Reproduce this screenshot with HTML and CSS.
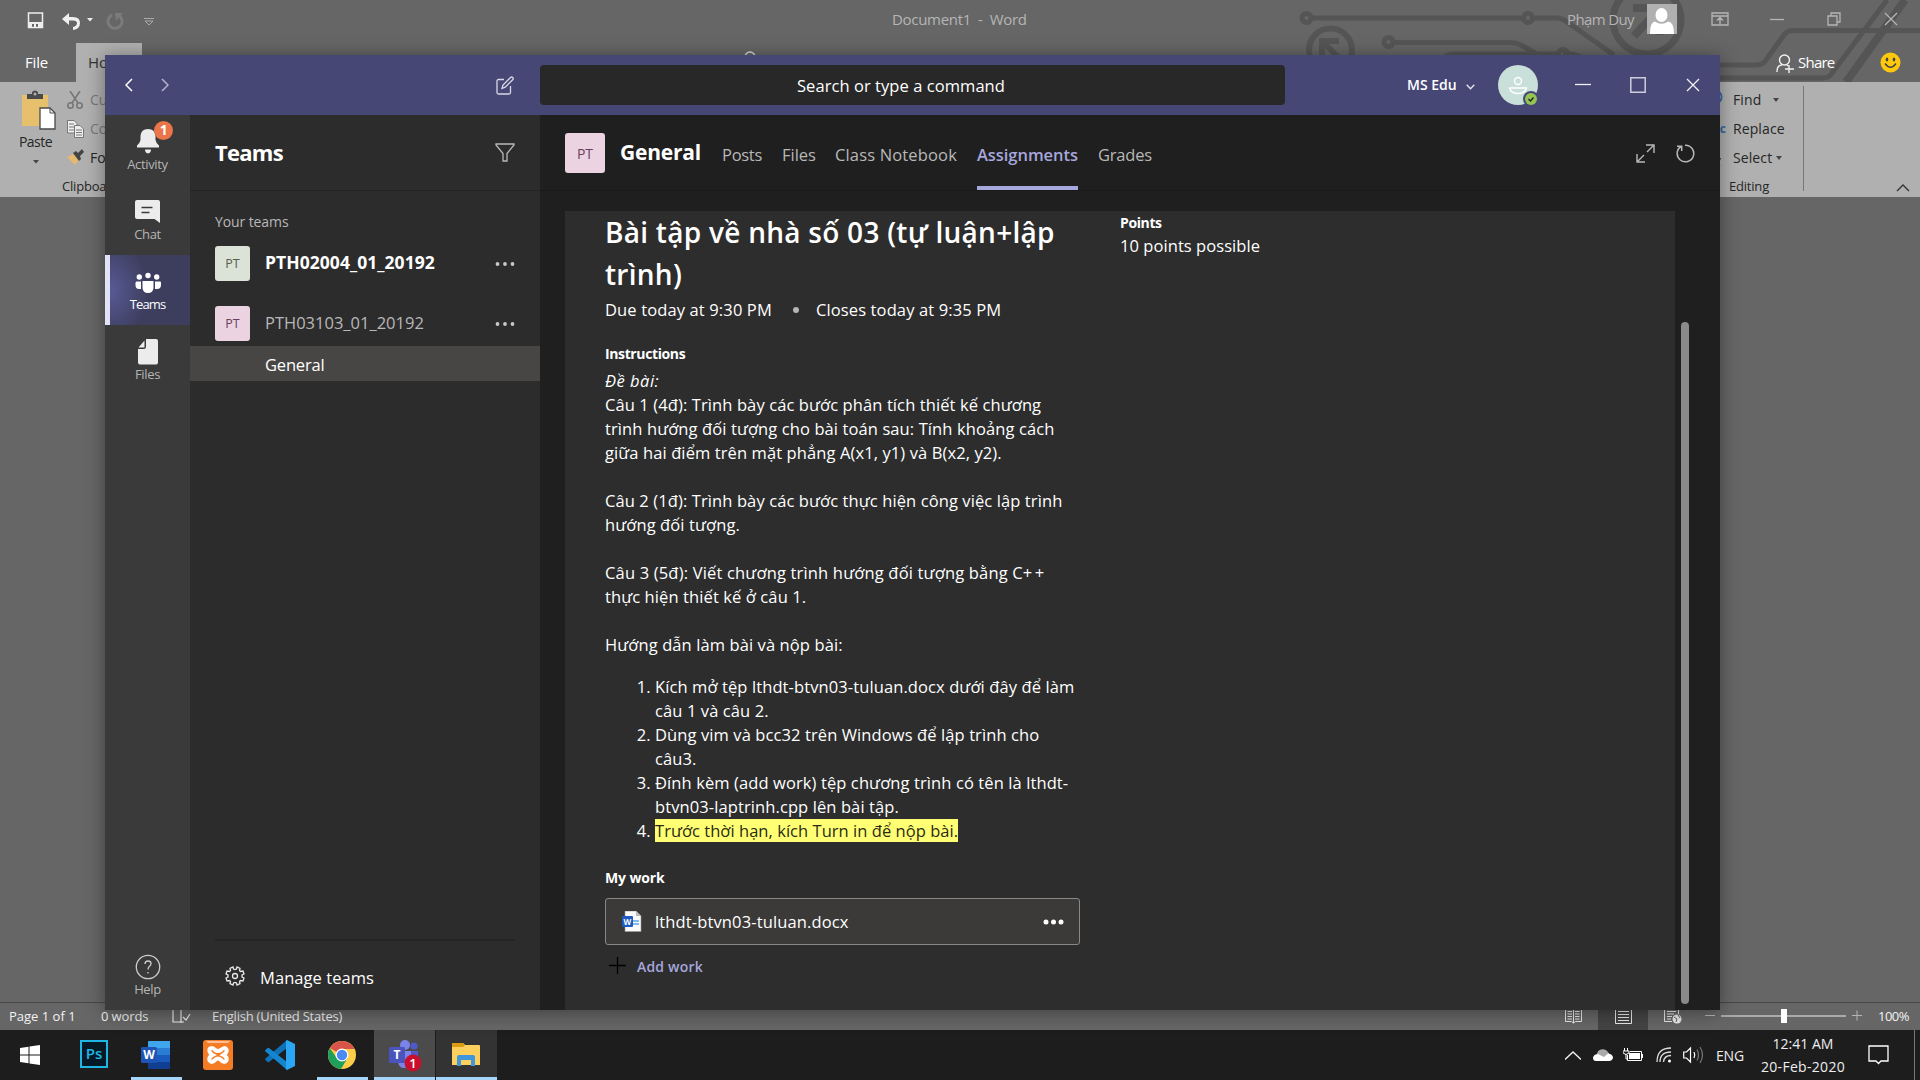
FILE: index.html
```html
<!DOCTYPE html>
<html lang="vi">
<head>
<meta charset="utf-8">
<title>Teams</title>
<link rel="stylesheet" href="styles.css">
</head>
<body>
<div class="desktop">

  <div class="word">
    <svg class="circuit" width="640" height="82" viewBox="1280 0 640 82" fill="none" stroke="#555" stroke-width="5">
      <circle cx="1306.500" cy="18" r="4.500"/><path d="M1311 18H1523"/><circle cx="1528" cy="18" r="4.500"/><path d="M1533 18H1556Q1562 18 1567 22L1614 55"/>
      <circle cx="1388.500" cy="42" r="4.500"/><path d="M1393 42.500H1510Q1516 42.500 1521 45L1540 56"/>
      <path d="M1445 56Q1450 54 1456 54H1558M1563 54Q1575 53 1582 58"/><circle cx="1563" cy="54" r="4.500"/>
      <circle cx="1330.500" cy="50" r="21.500" stroke-width="6"/><path d="M1322 58V41H1339M1322 41L1342 61" stroke-width="6"/>
      <circle cx="1647" cy="20" r="34" stroke-width="7"/><path d="M1633 8H1660V35M1659 9L1634 36" stroke-width="8"/>
      <path d="M1720 65H1756Q1763 65 1766 60L1784 35Q1787 30.500 1793 30.500H1920"/>
      <path d="M1720 78H1823Q1829 78 1832 73L1887 0"/><path d="M1846 82L1905 0" stroke-width="8"/>
    </svg>

    <header class="word-title">
      <div class="quick">
        <svg class="q-save" width="17" height="17" viewBox="0 0 17 17"><path d="M1.500 1H15.500V15.500H1.500Z" fill="none" stroke="#eee" stroke-width="1.500"/><path d="M1 10H16V16H11V12H9V16H7V12H5V16H1Z" fill="#eee"/></svg>
        <svg class="q-undo" width="19" height="17" viewBox="0 0 19 17"><path d="M0 6L7 0V4H11Q18 4 18 10Q18 16 11 17L11 14Q15 13 15 10Q15 7.500 11 7.500H7V12Z" fill="#f0f0f0"/></svg>
        <svg class="q-caret" width="6" height="4"><path d="M0 0H6L3 3.500Z" fill="#eee"/></svg>
        <svg class="q-redo" width="18" height="18" viewBox="0 0 18 18"><path d="M6 3A7 7 0 1 0 12 3" fill="none" stroke="#7b7b7b" stroke-width="3"/><path d="M9 1H17L10 9Z" fill="#7b7b7b"/></svg>
        <svg class="q-more" width="10" height="8"><path d="M0 .5H10M1 3H9L5 7Z" fill="none" stroke="#aaa"/></svg>
      </div>
      <div class="doc-name">Document1&nbsp; -&nbsp; Word</div>
      <div class="account">
        <span class="account-name">Phạm Duy</span>
        <svg width="30" height="30" viewBox="0 0 30 30"><path d="M0 0H30V30H0Z" fill="#b0b0b0"/><ellipse cx="14.500" cy="11" rx="6" ry="7" fill="#fff"/><path d="M3 30Q3 18 8 17.500Q14.500 22 21 17.500Q27 18 27 30Z" fill="#fff"/></svg>
      </div>
      <div class="word-controls">
        <svg width="18" height="14" viewBox="0 0 18 14" fill="none" stroke="#b5b5b5" stroke-width="1.300"><path d="M1 1H17V13H1ZM1 4H17M9 12V6M6 8.500L9 5.500L12 8.500"/></svg>
        <svg width="14" height="14"><path d="M0 7.500H14" stroke="#b5b5b5" stroke-width="1.300"/></svg>
        <svg width="14" height="14" fill="none" stroke="#b5b5b5" stroke-width="1.300"><path d="M1 4H10V13H1ZM4 4V1H13V10H10"/></svg>
        <svg width="14" height="14"><path d="M1 1L13 13M13 1L1 13" stroke="#b5b5b5" stroke-width="1.300"/></svg>
      </div>
    </header>

    <div class="word-tabs">
      <span class="tab-file">File</span><span class="tab-home">Home</span>
      <svg class="bulb" width="12" height="16"><circle cx="6" cy="6" r="5" fill="none" stroke="#ddd" stroke-width="1.300"/></svg>
      <svg class="share-icon" width="19" height="20" viewBox="0 0 19 20" fill="none" stroke="#f2f2f2" stroke-width="1.400"><circle cx="8.500" cy="6" r="5"/><path d="M1 18Q1 11 6 11M11 11L12 12M13 11V19M9 15H18"/></svg>
      <span class="share">Share</span>
      <svg class="smiley" width="21" height="21" viewBox="0 0 21 21"><circle cx="10.500" cy="10.500" r="10" fill="#fdc80e"/><path d="M5 11.500Q10.500 19 16 11.500" fill="none" stroke="#444" stroke-width="1.500"/><ellipse cx="7" cy="7.500" rx="1.300" ry="2" fill="#444"/><ellipse cx="14" cy="7.500" rx="1.300" ry="2" fill="#444"/></svg>
    </div>

    <div class="ribbon">
      <div class="paste">
        <svg width="36" height="40" viewBox="0 0 36 40"><path d="M1 5H27V36H1Z" fill="#e6c06d"/><path d="M6 9V4H11V2Q14 -1 17 2V4H22V9Z" fill="#4a4a4a"/><circle cx="14" cy="4" r="1.500" fill="#b0b0b0"/><path d="M19 18H29L34 23V39H19Z" fill="#fff" stroke="#4a4a4a" stroke-width="1.300"/><path d="M29 18V23H34" fill="none" stroke="#4a4a4a"/></svg>
        <span>Paste</span>
        <svg width="6" height="4"><path d="M0 0H6L3 3.500Z" fill="#444"/></svg>
      </div>
      <div class="clip">
        <div class="clip-row dim"><svg width="17" height="18" viewBox="0 0 17 18" fill="none" stroke="#777" stroke-width="1.600"><path d="M3 0L11 12M13 0L5 12"/><circle cx="3.500" cy="14.500" r="2.700"/><circle cx="12.500" cy="14.500" r="2.700"/></svg><span>Cu</span></div>
        <div class="clip-row dim"><svg width="17" height="18" viewBox="0 0 17 18" fill="#eee" stroke="#777"><path d="M.5 .5H7L10 3.500V13H.5ZM2 4H7M2 7H7M2 10H7"/><path d="M7.500 5.500H13L16.500 9V17.500H7.500ZM9 10H15M9 12.500H15M9 15H15"/></svg><span>Co</span></div>
        <div class="clip-row"><svg width="17" height="17" viewBox="0 0 17 17"><path d="M0 8L6 5L12 11L8 16Z" fill="#e6b870"/><path d="M6 4L9 2L11 4L15 0L17 3L13 7L14 10L12 12Z" fill="#444"/></svg><span>Fo</span></div>
        <span class="group-label">Clipboa</span>
      </div>
      <div class="editing">
        <div class="edit-row"><svg width="16" height="18" viewBox="0 0 16 18"><circle cx="5" cy="6" r="6.500" fill="#eee" stroke="#2f6aa8" stroke-width="2"/></svg><span>Find</span><i></i></div>
        <div class="edit-row"><b>c</b><span>Replace</span></div>
        <div class="edit-row near"><svg width="16" height="18" viewBox="0 0 16 18"><path d="M3 2V16L7 12L10 17M3 2L11 10H7" fill="#eee" stroke="#444"/></svg><span>Select</span><i></i></div>
        <span class="group-label">Editing</span>
      </div>
      <svg class="collapse" width="14" height="8"><path d="M1 7L7 1L13 7" fill="none" stroke="#333" stroke-width="1.400"/></svg>
    </div>

    <div class="page-area"></div>

    <footer class="status">
      <span class="st-page">Page 1 of 1</span><span class="st-words">0 words</span>
      <svg class="st-proof" width="19" height="15" viewBox="0 0 19 15" fill="none" stroke="#e8e8e8" stroke-width="1.200"><path d="M9 1V14M9 13H1V0M9 1L11 0H18M9 13H12M11 8L14 11L18 5"/></svg>
      <span class="st-lang">English (United States)</span>
      <div class="st-view"><svg width="17" height="15" viewBox="0 0 17 15" fill="none" stroke="#e8e8e8"><path d="M.5 0V12.500H6.500L8.500 14L10.500 12.500H16.500V0M8.500 0V14M2.500 2.500H7M2.500 5H7M2.500 7.500H7M2.500 10H7M10 2.500H14.500M10 5H14.500M10 7.500H14.500M10 10H14.500"/></svg></div>
      <div class="st-view on"><svg width="17" height="15" viewBox="0 0 17 15" fill="none" stroke="#e8e8e8"><path d="M.5 0V14.500H16.500V0M3 2.500H14M3 5.500H14M3 8.500H14M3 11.500H14"/></svg></div>
      <div class="st-view"><svg width="18" height="15" viewBox="0 0 18 15" fill="none" stroke="#e8e8e8"><path d="M.5 0V12.500H8M14.500 0V5M3 2.500H12M3 5H10M3 7.500H8M3 10H7"/><circle cx="13" cy="10" r="4.500" fill="#e8e8e8" stroke="none"/><path d="M10 8L13 10L12 13M14 6L16 9" stroke="#666"/></svg></div>
      <svg class="zoom" width="158" height="16" viewBox="0 0 158 16"><path d="M0 7.500H10M147 7.500H157M152 2.500V12.500" stroke="#b5b5b5"/><path d="M16 8H141" stroke="#eee"/><path d="M76 1H82V15H76Z" fill="#fff"/></svg>
      <span class="st-pct">100%</span>
    </footer>
  </div>

  <div class="taskbar">
    <div class="app start"><svg width="20" height="20" viewBox="0 0 20 20" fill="#fff"><path d="M0 3L8.500 1.700V9.500H0ZM9.500 1.500L20 0V9.500H9.500ZM0 10.500H8.500V18.300L0 17ZM9.500 10.500H20V20L9.500 18.500Z"/></svg></div>
    <div class="app"><div class="ps">Ps</div></div>
    <div class="app open"><svg width="30" height="28" viewBox="0 0 30 28"><path d="M7 1Q7 0 8 0H29V7H7Z" fill="#41a5ee"/><path d="M7 7H29V14H7Z" fill="#2b7cd3"/><path d="M7 14H29V21H7Z" fill="#185abd"/><path d="M7 21H29V28H8Q7 28 7 27Z" fill="#103f91"/><rect y="6" width="16" height="16" rx="1.500" fill="#1e55b5"/><text x="8" y="18" class="app-letter">W</text></svg></div>
    <div class="app"><svg width="30" height="30" viewBox="0 0 30 30"><rect width="30" height="30" rx="3" fill="#f57c24"/><path d="M3 1H27L25 3H5Z" fill="#f9c19b"/><path d="M9 8Q5.500 8 6.500 11.500Q7.500 14 9.500 15Q5.500 17 6.500 20.500Q8.500 23.500 12 20Q15 17 18 20Q21.500 23.500 23.500 20.500Q24.500 17 20.500 15Q24.500 12.500 23.500 9.500Q21.500 6.500 18 10Q15 12 12 10Q10.500 8 9 8Z" fill="none" stroke="#fff" stroke-width="4"/></svg></div>
    <div class="app"><svg width="30" height="30" viewBox="0 0 30 30"><path d="M22 0V8L4 22Q3 22.500 2 21.500L0 19.500Q0 18.500 1 18Z" fill="#0d72b8"/><path d="M22 30V22L4 8Q3 7.500 2 8.500L0 10.500Q0 11.500 1 12Z" fill="#1486cf"/><path d="M22 0L30 4V26L22 30L21 29V1Z" fill="#2aa6f2"/></svg></div>
    <div class="app open"><svg width="28" height="28" viewBox="0 0 28 28"><circle cx="14" cy="14" r="14" fill="#fccd46"/><path d="M14 14L1.900 7A14 14 0 0 1 26.100 7L26 8H14Z" fill="#d9534a"/><path d="M1.900 7A14 14 0 0 0 13 28L19.500 17L14 14L8.800 17Z" fill="#1f9f5c"/><circle cx="14" cy="14" r="6.500" fill="#fff"/><circle cx="14" cy="14" r="5.200" fill="#4a8af4"/></svg></div>
    <div class="app open active"><svg width="34" height="32" viewBox="0 0 34 32"><circle cx="16" cy="5" r="5" fill="#7b83eb"/><circle cx="25" cy="6" r="3.500" fill="#5059c9"/><path d="M20 11H29V20Q29 25 24 25H20Z" fill="#5059c9"/><path d="M9 11H22V21Q21 28 15 28Q10 28 9 22Z" fill="#7b83eb"/><rect y="7" width="16" height="16" rx="1.500" fill="#4b53bc"/><text x="8" y="19" class="app-letter">T</text><circle cx="24" cy="23" r="8.500" fill="#c8102e"/><text x="24" y="28" class="app-count">1</text></svg></div>
    <div class="app open recent"><svg width="28" height="26" viewBox="0 0 28 26"><path d="M0 2Q0 1 1 1H11L13 3H27Q28 3 28 4V23H0Z" fill="#fdd05e"/><path d="M0 4V2Q0 1 1 1H11L13 3L11 5H0Z" fill="#dc9c10"/><path d="M5 24V15Q5 13 7 13H21Q23 13 23 15V24H19V18H9V24Z" fill="#3e97dc"/></svg></div>

    <div class="tray">
      <svg class="t-up" width="16" height="9"><path d="M0 8.500L8 1L16 8.500" fill="none" stroke="#eee" stroke-width="1.400"/></svg>
      <svg class="t-cloud" width="20" height="14" viewBox="0 0 20 14"><path d="M4 8A6 6 0 0 1 15 4Q18 8 18 10L8 12Z" fill="#aaa"/><path d="M3 13Q0 13 0 9.500Q1 6 5 6L11 9L15 5.500Q20 6 20 10Q19 13 16 13Z" fill="#fff"/></svg>
      <svg class="t-batt" width="20" height="14" viewBox="0 0 20 14"><path d="M4.500 7V12.500H18.500V3.500H7" fill="none" stroke="#fff"/><path d="M6 5H17V11H6ZM19 6H20V10H19Z" fill="#fff"/><path d="M1.500 0V3M4.500 0V3M0 3H6V5Q3 8 0 5ZM3 6V11H5" fill="none" stroke="#fff"/></svg>
      <svg class="t-wifi" width="16" height="16" viewBox="0 0 16 16" fill="none" stroke="#ddd" stroke-width="1.300"><path d="M1 15Q1 1 15 1M4 15Q4 5 15 5M7.500 15Q8 8.500 15 8.500"/><circle cx="13.500" cy="14" r="1.500" fill="#fff" stroke="none"/></svg>
      <svg class="t-vol" width="21" height="18" viewBox="0 0 21 18" fill="none" stroke="#fff" stroke-width="1.200"><path d="M.7 6H3.500L7.500 2V16L3.500 12H.7Z"/><path d="M11 6Q12.500 9 11 12" /><path d="M14 3.500Q17 9 14 14.500M17 1Q22 9 17 17" stroke="#777"/></svg>
      <span class="t-lang">ENG</span>
      <div class="clock"><span>12:41 AM</span><span class="date">20-Feb-2020</span></div>
      <svg class="t-note" width="21" height="20" viewBox="0 0 21 20"><path d="M1 1H20V16H13L10.500 18.500L8 16H1Z" fill="none" stroke="#fff" stroke-width="1.300"/></svg>
    </div>
  </div>

  <div class="teams">
    <header class="tm-bar">
      <svg class="back" width="8" height="14"><path d="M7 1L1 7L7 13" fill="none" stroke="#fff" stroke-width="1.500"/></svg>
      <svg class="fwd" width="8" height="14"><path d="M1 1L7 7L1 13" fill="none" stroke="#b4b4cf" stroke-width="1.500"/></svg>
      <svg class="compose" width="18" height="19" viewBox="0 0 18 19" fill="none" stroke="#d9d9e6" stroke-width="1.300"><path d="M8 3.500H2.500Q1 3.500 1 5V16.500Q1 18 2.500 18H13Q14.500 18 14.500 16.500V10"/><path d="M6 12.500L7 9L14.500 1.500Q15.500 .5 16.700 1.500Q17.700 2.700 16.700 3.700L9.200 11.200Z"/></svg>
      <div class="search">Search or type a command</div>
      <span class="org">MS Edu</span>
      <svg class="org-caret" width="9" height="6"><path d="M.7 .7L4.500 4.700L8.300 .7" fill="none" stroke="#e6e6f0" stroke-width="1.300"/></svg>
      <svg class="me" width="40" height="40" viewBox="0 0 40 40"><circle cx="20" cy="20" r="20" fill="#c9dfd9"/><g fill="none" stroke="#fff" stroke-width="1.400"><circle cx="20" cy="16" r="3.500"/><path d="M11.500 23H28.500Q27 28.500 20 28.500Q13 28.500 11.500 23Z"/></g><circle cx="33" cy="34" r="8" fill="#464775"/><circle cx="33" cy="34" r="6" fill="#92c353"/><path d="M30.500 34L32.500 36L35.500 32.500" fill="none" stroke="#222" stroke-width="1.300"/></svg>
      <div class="tm-controls">
        <svg width="16" height="16"><path d="M0 7.500H16" stroke="#f2f2f7" stroke-width="1.300"/></svg>
        <svg width="16" height="16"><path d="M.8 .8H15.200V15.200H.8Z" fill="none" stroke="#cdcdde" stroke-width="1.500"/></svg>
        <svg width="16" height="16"><path d="M2 2L14 14M14 2L2 14" stroke="#f2f2f7" stroke-width="1.300"/></svg>
      </div>
    </header>

    <div class="tm-body">
      <nav class="rail">
        <div class="rail-item"><svg width="32" height="30" viewBox="0 0 32 30" fill="#ececec"><path d="M16 4Q23 4 23.500 11V15Q24 18 27 20.500V22.500H5V20.500Q8 18 8.500 15V11Q9 4 16 4ZM13 24.500H19Q19 28 16 28.500Q13 28 13 24.500Z"/></svg><span>Activity</span><em>1</em></div>
        <div class="rail-item chat"><svg width="32" height="30" viewBox="0 0 32 30" fill="#ececec"><path d="M5 5H26Q28 5 28 7V28L22.500 24H5Q3 24 3 22V7Q3 5 5 5Z"/><path d="M9.500 12.500H20.500M9.500 17.500H17.500" stroke="#3b3a39" stroke-width="1.300"/></svg><span>Chat</span></div>
        <div class="rail-item current"><svg width="32" height="30" viewBox="0 0 32 30" fill="#fff"><circle cx="16" cy="10.500" r="2.700"/><circle cx="7.300" cy="12" r="2.700"/><circle cx="24.700" cy="12" r="2.700"/><path d="M10.500 16H21.500V23Q21 28 16 28Q11 28 10.500 23ZM4.500 16.500H9V24H7Q3.500 24 3.500 20V17.500ZM23 16.500H28Q29 16.500 29 17.500V20Q29 24 25 24H23Z"/></svg><span>Teams</span></div>
        <div class="rail-item"><svg width="32" height="30" viewBox="0 0 32 30" fill="#ececec"><path d="M14 4H24Q26 4 26 6V27.500Q26 29.500 24 29.500H8Q6 29.500 6 27.500V14H12Q14 14 14 12ZM12.500 5.500V12.500H6.500Z"/></svg><span>Files</span></div>
        <div class="rail-item help"><svg width="32" height="30" viewBox="0 0 32 30"><circle cx="16" cy="17" r="11.700" fill="none" stroke="#ccc" stroke-width="1.300"/><path d="M13 14Q13 11 16 11Q19 11 19 13.500Q19 15 17.500 16.200Q16 17.500 16 19.500M16 22V23.500" fill="none" stroke="#ccc" stroke-width="1.300"/></svg><span>Help</span></div>
      </nav>

      <aside class="side">
        <div class="side-head"><h2>Teams</h2><svg width="20" height="19" viewBox="0 0 20 19"><path d="M1 1H19V2L12 10.500V18H8V10.500L1 2Z" fill="none" stroke="#b8b8b8" stroke-width="1.300"/></svg></div>
        <div class="side-label">Your teams</div>
        <div class="team"><span class="tile green">PT</span><strong>PTH02004_01_20192</strong><svg width="20" height="4" fill="#c8c8c8"><circle cx="2.500" cy="2" r="1.900"/><circle cx="10" cy="2" r="1.900"/><circle cx="17.500" cy="2" r="1.900"/></svg></div>
        <div class="team second"><span class="tile">PT</span><span class="team-name">PTH03103_01_20192</span><svg width="20" height="4" fill="#c8c8c8"><circle cx="2.500" cy="2" r="1.900"/><circle cx="10" cy="2" r="1.900"/><circle cx="17.500" cy="2" r="1.900"/></svg></div>
        <div class="channel">General</div>
        <div class="manage"><svg width="20" height="20" viewBox="0 0 20 20" fill="none" stroke="#e8e8e8" stroke-width="1.300"><path d="M8 1L8.500 3L10 3.500L11.500 3L12 1L15 2.300L14.500 4.500L15.500 5.500L18 5L19 8L17 9V11L19 12L18 15L15.500 14.500L14.500 15.500L15 17.700L12 19L11.500 17L10 16.500L8.500 17L8 19L5 17.700L5.500 15.500L4.500 14.500L2 15L1 12L3 11V9L1 8L2 5L4.500 5.500L5.500 4.500L5 2.300Z"/><circle cx="10" cy="10" r="2.500"/></svg>Manage teams</div>
      </aside>

      <main class="main">
        <div class="main-head">
          <span class="tile big">PT</span>
          <h1>General</h1>
          <a class="tab posts">Posts</a><a class="tab files">Files</a><a class="tab notebook">Class Notebook</a><a class="tab sel">Assignments</a><a class="tab grades">Grades</a>
          <svg class="expand" width="19" height="19" viewBox="0 0 19 19" fill="none" stroke="#b8b8b8" stroke-width="1.400"><path d="M10 1H18V9M18 1L11 8M1 10V18H9M1 18L8 11"/></svg>
          <svg class="reload" width="19" height="19" viewBox="0 0 19 19" fill="none" stroke="#b8b8b8" stroke-width="1.500"><path d="M5 2.500A8.300 8.300 0 1 0 9.500 1.200H9M1 2.200H5.700V7"/></svg>
        </div>
        <div class="main-scroll">
          <section class="card">
            <div class="task">
              <h3>Bài tập về nhà số 03 (tự luận+lập<br>trình)</h3>
              <div class="due"><span>Due today at 9:30 PM</span><i></i><span>Closes today at 9:35 PM</span></div>
              <h4 class="instr">Instructions</h4>
              <div class="text">
                <em>Đề bài:</em><br>
                Câu 1 (4đ): Trình bày các bước phân tích thiết kế chương<br>trình hướng đối tượng cho bài toán sau: Tính khoảng cách<br>giữa hai điểm trên mặt phẳng A(x1, y1) và B(x2, y2).<br><br>
                Câu 2 (1đ): Trình bày các bước thực hiện công việc lập trình<br>hướng đối tượng.<br><br>
                <span class="wide">Câu 3 (5đ): Viết chương trình hướng đối tượng bằng C<span class="plus">++</span></span><br>thực hiện thiết kế ở câu 1.<br><br>
                Hướng dẫn làm bài và nộp bài:
                <ol>
                  <li>Kích mở tệp lthdt-btvn03-tuluan.docx dưới đây để làm<br>câu 1 và câu 2.</li>
                  <li>Dùng vim và bcc32 trên Windows để lập trình cho<br>câu3.</li>
                  <li>Đính kèm (add work) tệp chương trình có tên là lthdt-<br>btvn03-laptrinh.cpp lên bài tập.</li>
                  <li><mark>Trước thời hạn, kích Turn in để nộp bài.</mark></li>
                </ol>
              </div>
              <h4 class="mywork">My work</h4>
              <div class="file">
                <svg width="20" height="21" viewBox="0 0 20 21"><path d="M3 0H14L19 5V20.500H3Z" fill="#fafafa" stroke="#999" stroke-width=".6"/><path d="M14 0V5H19Z" fill="#bbb"/><path d="M11 10H17M11 13H17" stroke="#5aa5e8" stroke-width="1.600"/><rect y="5" width="11" height="11" rx="1" fill="#1e5bc0"/><text x="5.500" y="14" class="doc-letter">W</text></svg>
                <span>lthdt-btvn03-tuluan.docx</span>
                <svg class="file-more" width="21" height="6" fill="#fff"><circle cx="3" cy="3" r="2.500"/><circle cx="10.500" cy="3" r="2.500"/><circle cx="18" cy="3" r="2.500"/></svg>
              </div>
              <div class="add"><svg width="17" height="17"><path d="M0 8.500H17M8.500 0V17" stroke="#000" stroke-width="1.300"/></svg>Add work</div>
            </div>
            <div class="points"><h4>Points</h4><p>10 points possible</p></div>
          </section>
          <div class="scrollbar"></div>
        </div>
      </main>
    </div>
  </div>
</div>
</body>
</html>
```
FILE: styles.css
```css
* { box-sizing: border-box; }
body { margin: 0; overflow: hidden; background: #666; font-family: "Open Sans", "Noto Sans", sans-serif; }
h1, h2, h3, h4, p { margin: 0; }
svg { display: block; flex: none; }
span, a, div { white-space: nowrap; }
.desktop { position: relative; display: flex; flex-direction: column; width: 1920px; height: 1080px; overflow: hidden; }

/* Word */
.word { position: relative; display: flex; flex-direction: column; height: 1030px; background: #666; }
.circuit { position: absolute; top: 0; right: 0; }
.word-title { position: relative; display: flex; height: 43px; font-size: 15px; color: #b5b5b5; }
.quick { display: flex; width: 892px; padding: 12px 0 0 27px; }
.q-undo { margin: 1px 0 0 18px; }
.q-caret { margin: 6px 0 0 6px; }
.q-redo { margin: 0 0 0 13px; }
.q-more { margin: 6px 0 0 20px; }
.doc-name { width: 675px; line-height: 39px; letter-spacing: -.31px; }
.account { display: flex; width: 144px; padding-top: 4px; }
.account-name { width: 80px; line-height: 31px; letter-spacing: -.62px; }
.word-controls { display: flex; gap: 43px; padding-top: 12px; }
.word-controls svg:nth-child(2) { margin-left: -2px; }
.word-tabs { position: relative; display: flex; height: 39px; font-size: 15px; line-height: 39px; color: #fff; }
.tab-file { width: 71px; padding-left: 25px; letter-spacing: -.19px; }
.tab-home { width: 66px; padding-left: 12px; background: #b0b0b0; color: #333; }
.tab-file { width: 76px; }
.bulb { margin: 8px 0 0 602px; }
.share-icon { margin: 11px 0 0 1020px; }
.share { width: 85px; padding-left: 3px; letter-spacing: -.76px; }
.smiley { margin-top: 9px; }
.ribbon { position: relative; display: flex; height: 115px; background: #b0b0b0; color: #262626; font-size: 14px; }
.paste { display: flex; flex-direction: column; align-items: center; width: 53px; margin-left: 9px; padding-top: 8px; letter-spacing: -.5px; }
.paste svg:first-child { margin-left: 6px; }
.paste span { margin: 1px 0 7px; line-height: 22px; }
.clip { width: 43px; padding: 3px 0 0 5px; overflow: hidden; }
.clip-row { display: flex; align-items: center; gap: 6px; width: 38px; height: 29px; overflow: hidden; }
.dim { color: #777; }
.group-label { display: block; margin-top: 4px; font-size: 13px; line-height: 20px; letter-spacing: -.2px; }
.clip .group-label { margin-left: -5px; }
.editing { width: 94px; height: 105px; margin: 4px 0 0 1605px; border-right: 1px solid #777; }
.edit-row { display: flex; align-items: center; gap: 7px; height: 29px; letter-spacing: .1px; }
.edit-row:first-child { margin-top: -1px; }
.edit-row b { width: 16px; font-size: 12px; text-align: right; color: #2f6aa8; }
.edit-row i { margin-left: 5px; border: 3px solid transparent; border-top: 4px solid #444; border-bottom: 0; }
.edit-row.near i { margin-left: -3px; }
.editing .group-label { margin-left: 19px; }
.collapse { margin: 102px 0 0 92px; }
.page-area { flex: 1; background: #666; }
.status { display: flex; align-items: center; height: 28px; padding-bottom: 1px; border-top: 1px solid #484848; color: #f2f2f2; font-size: 13px; }
.st-page { width: 92px; padding-left: 9px; }
.st-words { width: 80px; padding-left: 9px; letter-spacing: -.1px; }
.st-lang { width: 1357px; padding-left: 21px; letter-spacing: -.22px; }
.st-view { display: flex; align-items: center; justify-content: center; width: 50px; height: 27px; margin-bottom: -1px; }
.st-view.on { background: #444; }
.zoom { margin: 0 15px 0 7px; }
.st-pct { letter-spacing: -.5px; }

/* Taskbar */
.taskbar { display: flex; height: 50px; background: #1d1d1d; color: #eee; font-size: 14px; }
.app { position: relative; display: flex; align-items: center; justify-content: center; width: 62px; padding-bottom: 1px; }
.app.start { width: 63px; padding: 0 3px 0 0; }
.app.open::after { content: ""; position: absolute; left: 6px; right: 5px; bottom: 0; height: 3px; background: #a5d5fa; }
.app.active { width: 61px; margin-left: 1px; background: #4b4b4b; }
.app.recent { background: #333; border-left: 1px solid #1d1d1d; }
.app.active::after, .app.recent::after { left: 0; right: 0; }
.app.active svg { margin: 3px 0 0 2px; }
.app.recent svg { margin-right: 2px; }
.ps { width: 28px; height: 28px; margin-bottom: 2px; border: 2px solid #1fb6e6; background: #051a26; color: #1fb6e6; font-size: 15px; font-weight: 600; line-height: 23px; text-align: center; }
.app-letter { fill: #fff; font-size: 12px; font-weight: 700; text-anchor: middle; }
.app-count { fill: #fff; font-size: 13px; font-weight: 600; text-anchor: middle; }
.tray { display: flex; align-items: center; width: 350px; height: 50px; margin-left: 1068px; border-right: 1px solid #777; }
.t-cloud { margin-left: 12px; }
.t-batt { margin-left: 10px; }
.t-wifi { margin-left: 13px; }
.t-vol { margin-left: 11px; }
.t-lang { margin-left: 12px; width: 43px; letter-spacing: -.17px; }
.clock { display: flex; flex-direction: column; width: 88px; text-align: center; line-height: 23px; }
.date { letter-spacing: .3px; }
.t-note { margin-left: 21px; }

/* Teams window */
.teams { position: absolute; left: 105px; top: 55px; display: flex; flex-direction: column; width: 1615px; height: 955px; background: #201f1f; color: #fff; font-size: 16.5px; box-shadow: 0 2px 18px rgba(0, 0, 0, .4); }
.tm-bar { display: flex; align-items: center; height: 60px; background: #464775; }
.back { margin-left: 20px; }
.fwd { margin-left: 28px; }
.compose { margin-left: 327px; }
.search { width: 745px; height: 40px; margin-left: 26px; border-radius: 4px; background: #282828; line-height: 41px; text-align: center; letter-spacing: .06px; text-indent: -23px; }
.org { width: 59px; margin: 0 0 0 122px; font-size: 14px; font-weight: 600; line-height: 60px; }
.org-caret { margin-top: 3px; }
.me { margin-left: 23px; }
.tm-controls { display: flex; gap: 39px; margin-left: 37px; }
.tm-body { display: flex; flex: 1; min-height: 0; }
.rail { display: flex; flex-direction: column; width: 85px; background: #3a3a3a; }
.rail-item { position: relative; display: flex; flex-direction: column; align-items: center; height: 70px; padding-top: 10px; font-size: 13px; line-height: 18px; letter-spacing: -.35px; color: #b5b5b5; }
.rail-item em { position: absolute; left: 49px; top: 6px; width: 19px; height: 19px; border-radius: 50%; background: #e97548; color: #fff; font-size: 14px; font-style: normal; font-weight: 700; line-height: 18px; text-align: center; }
.rail-item.current { border-left: 5px solid #e2e2f6; padding-right: 5px; background: radial-gradient(ellipse 38px 50px at 0 50%, #585a96, #3d3e5e); color: #fff; letter-spacing: -.9px; }
.rail-item.help { margin-top: auto; }
.side { display: flex; flex-direction: column; width: 350px; background: #2d2c2c; }
.side-head { display: flex; align-items: center; justify-content: space-between; height: 76px; padding: 0 25px; border-bottom: 1px solid #252424; }
.side-head h2 { margin-top: -2px; font-size: 22px; letter-spacing: -.72px; line-height: 30px; }
.side-label { height: 55px; padding-left: 25px; color: #b8b8b8; font-size: 14px; line-height: 62px; letter-spacing: -.1px; }
.team { display: flex; align-items: center; height: 35px; padding: 0 25px; }
.team.second { margin-top: 25px; }
.team svg { margin-left: auto; }
.team strong, .team-name { margin: -3px 0 0 15px; }
.team strong { font-size: 17.5px; letter-spacing: .05px; }
.team-name { color: #b8b8b8; }
.tile { display: flex; align-items: center; justify-content: center; width: 35px; height: 35px; border-radius: 3px; background: #ebd3e2; color: #6b3f5c; font-size: 12.5px; }
.tile.green { background: #dbe2d7; color: #55604c; }
.tile.big { width: 40px; height: 40px; margin-top: 18px; font-size: 14px; }
.channel { height: 35px; margin-top: 5px; padding-left: 75px; background: #484644; line-height: 37px; letter-spacing: -.18px; }
.manage { display: flex; align-items: center; gap: 15px; height: 71px; margin: auto 25px 0; padding: 3px 0 0 10px; border-top: 2px solid #252424; letter-spacing: .06px; }
.manage svg { margin-top: -3px; }

.main { display: flex; flex-direction: column; width: 1180px; }
.main-head { display: flex; height: 76px; padding-left: 25px; border-bottom: 1px solid #1a1a1a; }
.main-head h1 { width: 117px; padding-left: 15px; font-size: 21px; line-height: 74px; letter-spacing: -.21px; }
.tab { height: 75px; line-height: 79px; color: #b8b8b8; }
.posts { width: 60px; letter-spacing: -.29px; }
.files { width: 53px; }
.notebook { width: 142px; letter-spacing: .15px; }
.sel { width: 101px; border-bottom: 4px solid #a6a7dc; color: #a6a7dc; font-weight: 600; letter-spacing: -.05px; }
.grades { width: 74px; margin-left: 20px; letter-spacing: -.19px; }
.expand { margin: 29px 0 0 464px; }
.reload { margin: 29px 0 0 21px; }
.main-scroll { display: flex; flex: 1; min-height: 0; padding: 20px 0 0 25px; }
.card { display: flex; width: 1110px; padding-left: 40px; background: #2d2d2d; }
.task { width: 475px; }
h3 { font-size: 28px; font-weight: 600; line-height: 42px; letter-spacing: .27px; }
.due { display: flex; align-items: center; margin-top: 3px; line-height: 24px; letter-spacing: .13px; }
.due i { width: 6px; height: 6px; margin: 0 17px 0 21px; border-radius: 50%; background: #b5b5b5; }
h4 { font-size: 14px; font-weight: 700; line-height: 20px; letter-spacing: -.38px; }
.instr { margin: 22px 0 5px; }
.text { line-height: 24px; letter-spacing: .1px; }
.text em { letter-spacing: .5px; }
.wide { letter-spacing: .17px; }
.plus { letter-spacing: 2.5px; }
ol { margin: 18px 0 0; padding-left: 50px; }
mark { background: #ffff73; color: #2b2b14; letter-spacing: .04px; }
.mywork { margin: 25px 0 10px; letter-spacing: -.14px; }
.file { display: flex; align-items: center; height: 47px; padding: 0 15px 0 16px; border: 1px solid #8a8886; border-radius: 3px; background: #3b3a39; letter-spacing: .13px; }
.file span { margin-left: 13px; }
.file-more { margin-left: auto; }
.doc-letter { fill: #fff; font-size: 8px; font-weight: 700; text-anchor: middle; }
.add { display: flex; align-items: center; gap: 11px; margin-top: 11px; padding-left: 4px; color: #a6a7dc; font-size: 14px; font-weight: 600; line-height: 22px; letter-spacing: .2px; }
.add svg { margin-top: -3px; }
.points { margin: 2px 0 0 40px; }
.points p { margin-top: 1px; line-height: 24px; letter-spacing: .06px; }
.scrollbar { width: 8px; height: 682px; margin: 111px 0 0 6px; border-radius: 4px; background: #8a8a8a; }
```
